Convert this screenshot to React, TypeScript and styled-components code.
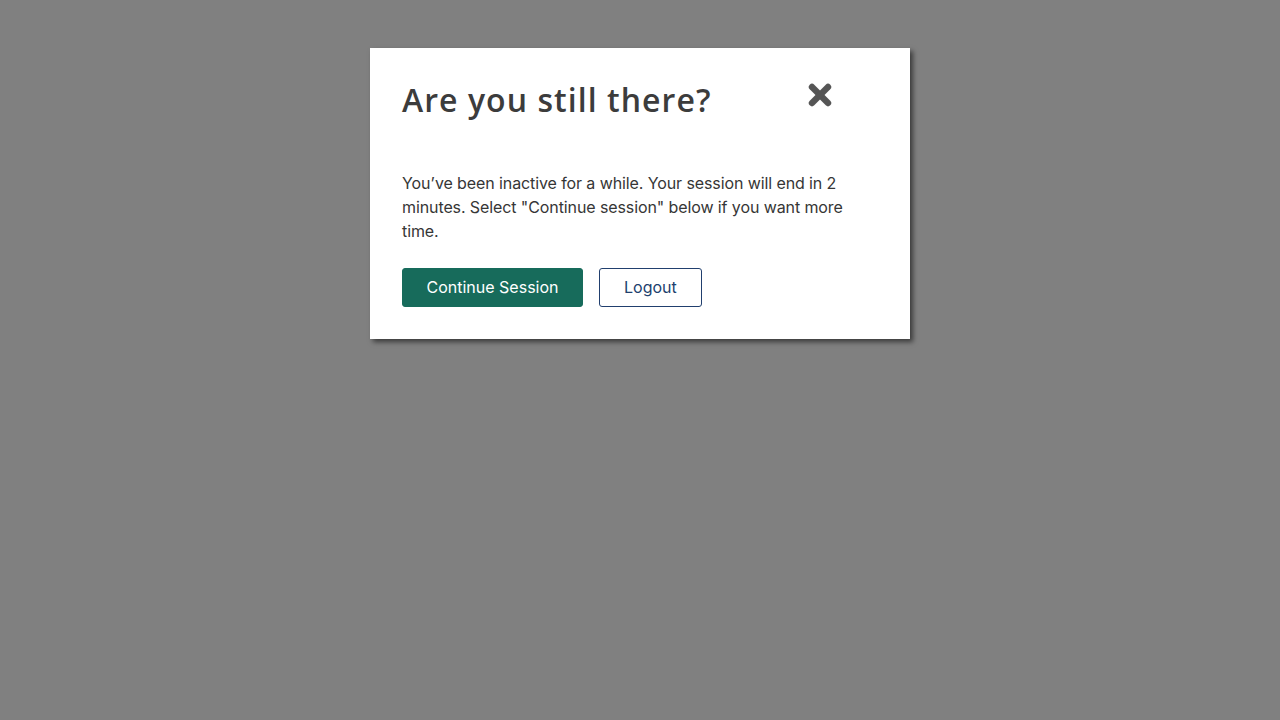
import styled, { createGlobalStyle } from "styled-components";

const GlobalStyle = createGlobalStyle`
    html, body {
        margin: 0;
        padding: 0;
        height: 100%;
        background: #808080;
    }
    #root {
        min-height: 100vh;
    }
`;

const Overlay = styled.div`
    width: 100%;
    min-height: 100vh;
    display: flex;
    justify-content: center;
    align-items: flex-start;
    padding-top: 48px;
    box-sizing: border-box;
`;
const Modal = styled.div`
    width: 540px;
    box-sizing: border-box;
    background: #ffffff;
    padding: 32px;
    box-shadow: 3px 3px 5px rgba(0, 0, 0, 0.55);
`;
const Header = styled.div`
    display: flex;
    align-items: flex-start;
    justify-content: space-between;
    padding-right: 46px;
`;
const Title = styled.h2`
    margin: 0;
    font-family: "Open Sans", "Liberation Sans", sans-serif;
    font-weight: 600;
    font-size: 32px;
    line-height: 40px;
    color: #3c3c3c;
    letter-spacing: 1.05px;
`;
const CloseButton = styled.button`
    border: none;
    background: none;
    padding: 0;
    margin-top: 3px;
    width: 24px;
    height: 24px;
    cursor: pointer;
    display: flex;
`;
const Body = styled.p`
    margin: 51px 0 0;
    font-family: "Inter", "Liberation Sans", sans-serif;
    font-size: 16px;
    line-height: 24px;
    color: #363636;
    letter-spacing: -0.1px;
`;
const Actions = styled.div`
    display: flex;
    gap: 16px;
    margin-top: 25px;
`;
const Button = styled.button<{ $primary?: boolean }>`
    height: 39px;
    box-sizing: border-box;
    padding: 0 ${(p) => (p.$primary ? "23.5px" : "24px")} 2px;
    border-radius: 3px;
    font-family: "Inter", "Liberation Sans", sans-serif;
    font-size: 16px;
    cursor: pointer;
    background: ${(p) => (p.$primary ? "#176b5b" : "#ffffff")};
    color: ${(p) => (p.$primary ? "#ffffff" : "#213f6e")};
    border: 1px solid ${(p) => (p.$primary ? "#176b5b" : "#213f6e")};
`;

function CloseIcon() {
    return (
        <svg width="24" height="24" viewBox="0 0 24 24">
            <g stroke="#555555" strokeWidth="6.4" strokeLinecap="round">
                <line x1="4" y1="4" x2="20" y2="20" />
                <line x1="20" y1="4" x2="4" y2="20" />
            </g>
        </svg>
    );
}

export default function App() {
    return (
        <>
            <GlobalStyle />
            <Overlay>
                <Modal role="dialog">
                    <Header>
                        <Title>Are you still there?</Title>
                        <CloseButton aria-label="Close">
                            <CloseIcon />
                        </CloseButton>
                    </Header>
                    <Body>
                        You’ve been inactive for a while. Your session will end in 2 minutes. Select "Continue session" below if you want more time.
                    </Body>
                    <Actions>
                        <Button $primary>Continue Session</Button>
                        <Button>Logout</Button>
                    </Actions>
                </Modal>
            </Overlay>
        </>
    );
}
